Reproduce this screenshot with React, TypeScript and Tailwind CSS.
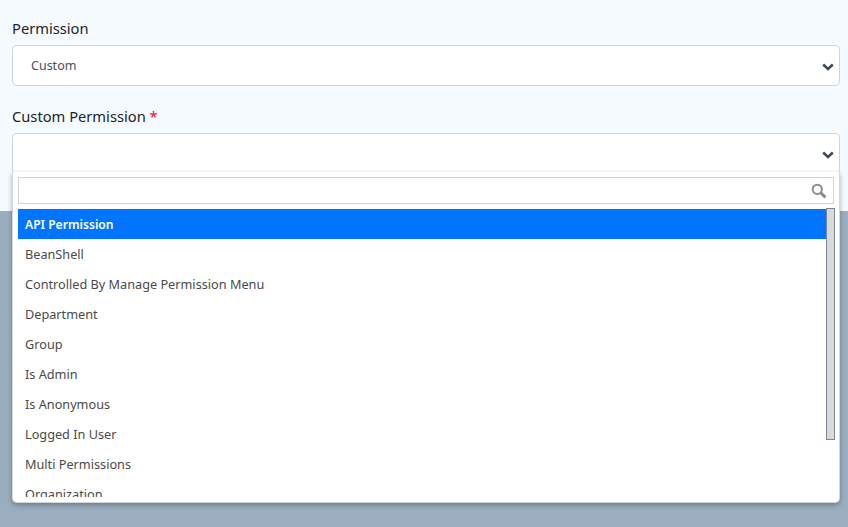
import React from 'react';

const options = [
  'API Permission',
  'BeanShell',
  'Controlled By Manage Permission Menu',
  'Department',
  'Group',
  'Is Admin',
  'Is Anonymous',
  'Logged In User',
  'Multi Permissions',
  'Organization',
];

const Chevron = () => (
  <svg width="12" height="8" viewBox="0 0 12 8" className="mt-[2px] shrink-0">
    <path d="M1.2 1.5 L6 6 L10.8 1.5" fill="none" stroke="#3f4a57" strokeWidth="2.5" />
  </svg>
);

const SearchGlyph = () => (
  <svg width="16" height="16" viewBox="0 0 16 16" className="shrink-0">
    <circle cx="6.3" cy="6.3" r="4.6" fill="none" stroke="#8c8c8c" strokeWidth="2" />
    <path d="M9.8 9.8 L14.4 14.4" fill="none" stroke="#8c8c8c" strokeWidth="3" />
  </svg>
);

export default function App() {
  return (
    <div className="flex h-[527px] w-[848px] flex-col overflow-hidden bg-[#9aaebf] font-['Noto_Sans',sans-serif]">
      {/* Form area */}
      <div className="h-[211px] bg-[#f5faff] pl-3 pr-2 pt-[18px]">
        <label className="block h-[27px] text-[14.7px] leading-[21px] text-[#212529]">Permission</label>
        <div className="flex h-[41px] items-center justify-between rounded-[5px] border border-[#ced4da] bg-white pl-[18px] pr-[5px] text-[12.5px] text-[#495057]">
          <span className="pt-[2px]">Custom</span>
          <Chevron />
        </div>
        <label className="mt-5 block h-[27px] text-[14.7px] leading-[21px] text-[#212529]">
          Custom Permission <span className="text-[#ff0033]">*</span>
        </label>
        <div className="relative flex h-[41px] items-center justify-end rounded-[5px] border border-[#ced4da] bg-white pr-[5px]">
          <Chevron />

          {/* Open dropdown */}
          <div className="absolute left-[-1px] top-[38px] z-10 flex h-[331px] w-[828px] flex-col gap-[5px] rounded-b-[5px] border-x border-b border-[#d3d6da] bg-white px-[5px] pt-[5px] shadow-[0_2px_5px_rgba(0,0,0,0.3)]">
            <div className="flex h-[27px] w-[816px] items-center justify-end border border-[#ced4da] bg-white pr-[6px]">
              <SearchGlyph />
            </div>
            <div className="flex h-[288px] w-[817px] justify-between">
              <div className="w-[809px] overflow-hidden">
                {options.map((name, i) => (
                  <div
                    key={name}
                    className={
                      i === 0
                        ? 'flex h-[30px] items-center bg-[#0075ff] px-[7px] pt-[2px] text-[12.1px] font-semibold text-white'
                        : 'flex h-[30px] items-center px-[7px] pt-[2px] text-[12.7px] text-[#4a4a4a]'
                    }
                  >
                    {name}
                  </div>
                ))}
              </div>
              <div className="-mt-px h-[232px] w-[9px] border border-[#78879a] bg-[#d9d9d9]" />
            </div>
          </div>
        </div>
      </div>
      <div className="flex-1" />
    </div>
  );
}
